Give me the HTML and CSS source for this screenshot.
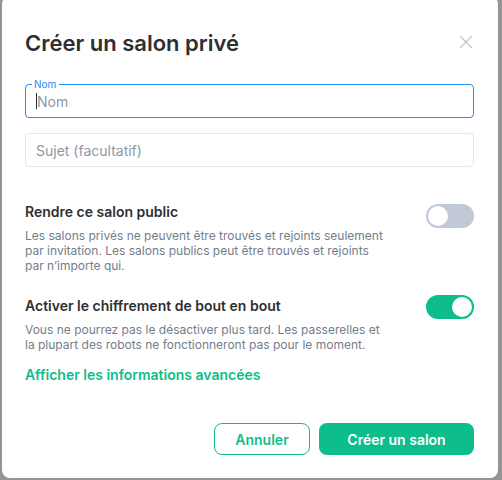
FILE: index.html
```html
<!DOCTYPE html>
<html lang="fr">
<head>
<meta charset="utf-8">
<link rel="stylesheet" href="styles.css">
</head>
<body>
<div class="backdrop">
  <div class="dialog">
    <div class="header">
      <h1 class="title">Créer un salon privé</h1>
      <svg class="close" width="14" height="14" viewBox="0 0 14 14"><path d="M1 1L13 13M13 1L1 13" stroke="#c1c6cd" stroke-width="1.3" fill="none"/></svg>
    </div>
    <div class="field focused">
      <span class="field-label">Nom</span>
      <span class="caret"></span><span class="placeholder">Nom</span>
    </div>
    <div class="field">
      <span class="placeholder">Sujet (facultatif)</span>
    </div>
    <div class="setting first">
      <div class="setting-text">
        <div class="setting-title">Rendre ce salon public</div>
        <div class="setting-desc">Les salons privés ne peuvent être trouvés et rejoints seulement par invitation. Les salons publics peut être trouvés et rejoints par n’importe qui.</div>
      </div>
      <div class="toggle"><span class="knob"></span></div>
    </div>
    <div class="setting">
      <div class="setting-text">
        <div class="setting-title">Activer le chiffrement de bout en bout</div>
        <div class="setting-desc">Vous ne pourrez pas le désactiver plus tard. Les passerelles et la plupart des robots ne fonctionneront pas pour le moment.</div>
      </div>
      <div class="toggle on"><span class="knob"></span></div>
    </div>
    <div class="advanced">Afficher les informations avancées</div>
    <div class="buttons">
      <div class="btn outline">Annuler</div>
      <div class="btn primary">Créer un salon</div>
    </div>
  </div>
</div>
</body>
</html>
```
FILE: styles.css
```css
html, body {
  margin: 0;
  padding: 0;
}
body {
  background: #959595;
  font-family: Inter, "Noto Sans", sans-serif;
  width: 502px;
  height: 480px;
  overflow: hidden;
}
.backdrop {
  padding-left: 2px;
}
.dialog {
  width: 496px;
  height: 482px;
  margin-top: -4px;
  background: #ffffff;
  border-radius: 8px;
  box-sizing: border-box;
  padding: 32px 24px 0 23px;
  display: flex;
  flex-direction: column;
}
.header {
  display: flex;
  justify-content: space-between;
  align-items: center;
  height: 30px;
}
.title {
  margin: 0;
  font-size: 22px;
  font-weight: 600;
  color: #2e2f32;
  line-height: 30px;
}
.close {
  margin-right: 1px;
  margin-top: -2px;
}
.field {
  position: relative;
  height: 34px;
  border: 1px solid #e3e8f0;
  border-radius: 4px;
  box-sizing: border-box;
  display: flex;
  align-items: center;
  padding-left: 10px;
  margin-top: 15px;
  font-size: 14px;
}
.header + .field {
  margin-top: 26px;
}
.field.focused {
  border-color: #238cf5;
}
.field-label {
  position: absolute;
  left: 6px;
  top: -7px;
  background: #fff;
  padding: 0 3px 0 2px;
  font-size: 10px;
  line-height: 12px;
  color: #238cf5;
}
.caret {
  width: 1px;
  height: 16px;
  background: #2e2f32;
}
.placeholder {
  color: #8d97a5;
}
.setting {
  display: flex;
  justify-content: space-between;
  align-items: flex-start;
  margin-top: 23px;
}
.setting.first {
  margin-top: 35px;
}
.setting-text {
  width: 362px;
}
.setting-title {
  font-size: 14px;
  font-weight: 600;
  color: #2e2f32;
  line-height: 20px;
}
.setting-desc {
  font-size: 12px;
  line-height: 15px;
  color: #737d8c;
  margin-top: 6px;
}
.toggle {
  width: 48px;
  height: 24px;
  border-radius: 12px;
  background: #c1c9d6;
  box-sizing: border-box;
  padding: 2px;
  display: flex;
  margin-top: 2px;
}
.toggle.on {
  background: #0dbd8b;
  justify-content: flex-end;
  margin-top: -1px;
}
.knob {
  width: 20px;
  height: 20px;
  border-radius: 50%;
  background: #fff;
}
.advanced {
  margin-top: 13px;
  font-size: 14px;
  font-weight: 600;
  color: #0dbd8b;
  line-height: 20px;
}
.buttons {
  display: flex;
  justify-content: flex-end;
  gap: 9px;
  margin-top: 38px;
}
.btn {
  height: 32px;
  box-sizing: border-box;
  border-radius: 8px;
  font-size: 14px;
  font-weight: 600;
  display: flex;
  align-items: center;
  justify-content: center;
}
.btn.outline {
  width: 96px;
  border: 1px solid #0dbd8b;
  color: #0dbd8b;
}
.btn.primary {
  width: 155px;
  background: #0dbd8b;
  color: #fff;
}
```
